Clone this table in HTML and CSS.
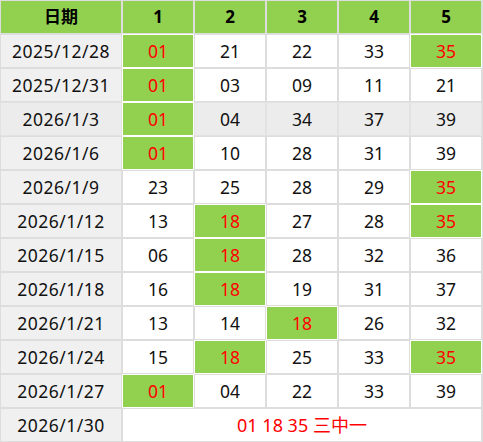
FILE: index.html
```html
<!DOCTYPE html>
<html lang="zh">
<head>
<meta charset="utf-8">
<link rel="stylesheet" href="styles.css">
</head>
<body>
<table class="draw">
  <colgroup>
    <col class="c-date">
    <col class="c-num"><col class="c-num"><col class="c-num"><col class="c-num"><col class="c-num">
  </colgroup>
  <thead>
    <tr><th>日期</th><th>1</th><th>2</th><th>3</th><th>4</th><th>5</th></tr>
  </thead>
  <tbody>
    <tr><td class="date">2025/12/28</td><td class="hit">01</td><td>21</td><td>22</td><td>33</td><td class="hit">35</td></tr>
    <tr><td class="date">2025/12/31</td><td class="hit">01</td><td>03</td><td>09</td><td>11</td><td>21</td></tr>
    <tr class="shade"><td class="date">2026/1/3</td><td class="hit">01</td><td>04</td><td>34</td><td>37</td><td>39</td></tr>
    <tr><td class="date">2026/1/6</td><td class="hit">01</td><td>10</td><td>28</td><td>31</td><td>39</td></tr>
    <tr><td class="date">2026/1/9</td><td>23</td><td>25</td><td>28</td><td>29</td><td class="hit">35</td></tr>
    <tr><td class="date">2026/1/12</td><td>13</td><td class="hit">18</td><td>27</td><td>28</td><td class="hit">35</td></tr>
    <tr><td class="date">2026/1/15</td><td>06</td><td class="hit">18</td><td>28</td><td>32</td><td>36</td></tr>
    <tr><td class="date">2026/1/18</td><td>16</td><td class="hit">18</td><td>19</td><td>31</td><td>37</td></tr>
    <tr><td class="date">2026/1/21</td><td>13</td><td>14</td><td class="hit">18</td><td>26</td><td>32</td></tr>
    <tr><td class="date">2026/1/24</td><td>15</td><td class="hit">18</td><td>25</td><td>33</td><td class="hit">35</td></tr>
    <tr><td class="date">2026/1/27</td><td class="hit">01</td><td>04</td><td>22</td><td>33</td><td>39</td></tr>
    <tr><td class="date">2026/1/30</td><td class="pred" colspan="5">01 18 35 三中一</td></tr>
  </tbody>
</table>
</body>
</html>
```
FILE: styles.css
```css
html, body {
  margin: 0;
  padding: 0;
  background: #ffffff;
}

.draw {
  border-collapse: separate;
  border-spacing: 0;
  table-layout: fixed;
  width: 483px;
  border-right: 1px solid #dddddd;
  font-family: "Noto Sans", "Noto Sans CJK SC", sans-serif;
  color: #000000;
}

.c-date { width: 122px; }
.c-num { width: 72px; }

.draw tr { height: 34px; }

.draw th,
.draw td {
  padding: 0;
  border: 1px solid #dddddd;
  text-align: center;
  vertical-align: middle;
  line-height: 32px;
  white-space: nowrap;
}

.draw th {
  background: #92d050;
  font-size: 17px;
  font-weight: bold;
}

.draw td {
  background: #ffffff;
  font-size: 17.5px;
  color: #111111;
}

.draw td.date {
  background: #f0f0f0;
  letter-spacing: 0.5px;
}

.draw tr.shade td {
  background: #ececec;
  border-color: #e2e2e2;
}

.draw td.hit,
.draw tr.shade td.hit {
  background: #92d050;
  border-color: #ffffff;
  color: #ff0000;
}

.draw td.pred {
  color: #ff0000;
  font-size: 18px;
}
```
